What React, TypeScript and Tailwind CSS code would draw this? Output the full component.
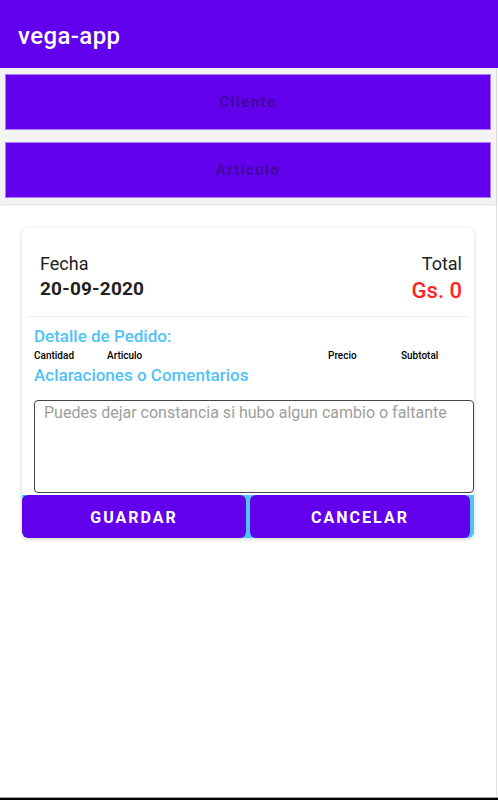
import React from "react";

const font = { fontFamily: "Roboto, 'Noto Sans', sans-serif" };

function SelectButton({ label }: { label: string }) {
  return (
    <button
      type="button"
      className="flex h-[56px] w-full items-center justify-center border border-[#a67dfb] bg-[#6200ee] text-[15px] font-medium tracking-[1.5px] text-[#3b0a8f]"
    >
      {label}
    </button>
  );
}

export default function App() {
  return (
    <div className="flex h-[800px] w-[498px] flex-col bg-white" style={font}>
      <header className="flex h-[68px] shrink-0 items-center bg-[#6200ee] px-[18px] pt-[4px]">
        <h1 className="text-[24px] font-medium tracking-[0.4px] text-white">vega-app</h1>
      </header>

      <main className="flex w-[497px] flex-1 flex-col border-r border-[#e0e0e0]">
        <div className="flex flex-col gap-[12px] bg-[#f3f3f3] px-[5px] pb-[6px] pt-[6px] shadow-[0_1px_2px_rgba(0,0,0,0.12)]">
          <SelectButton label="Cliente" />
          <SelectButton label="Articulo" />
        </div>

        <section className="mx-[22px] mt-[24px] overflow-hidden rounded-[6px] bg-white shadow-[0_1px_4px_rgba(0,0,0,0.18)]">
          <div className="flex justify-between pl-[18px] pr-[12px] pt-[24px] pb-[10px] text-[#212121]">
            <div>
              <p className="text-[18px] leading-[24px]">Fecha</p>
              <p className="text-[19px] font-bold leading-[26px] tracking-[0.2px]">20-09-2020</p>
            </div>
            <div className="flex flex-col items-end">
              <p className="text-[18px] leading-[24px]">Total</p>
              <p className="text-[22px] font-medium leading-[30px] text-[#ff2323]">Gs. 0</p>
            </div>
          </div>
          <div className="mx-[6px] h-px bg-[#ececec]" />

          <div className="pl-[12px] pt-[9px]">
            <h2 className="text-[17px] font-medium leading-[20px] text-[#4fc3f7]">Detalle de Pedido:</h2>
            <div className="mt-[4px] flex text-[10px] font-medium leading-[12px] text-black">
              <span className="w-[73px]">Cantidad</span>
              <span className="w-[221px]">Articulo</span>
              <span className="w-[73px]">Precio</span>
              <span>Subtotal</span>
            </div>
            <h2 className="mt-[3px] text-[17px] font-medium leading-[20px] text-[#4fc3f7]">
              Aclaraciones o Comentarios
            </h2>
            <textarea
              placeholder="Puedes dejar constancia si hubo algun cambio o faltante"
              className="mt-[15px] block h-[93px] w-full resize-none rounded-[4px] border border-[#444] px-[9px] py-[1px] text-[16px] leading-[22px] text-[#212121] outline-none placeholder:text-[#9e9e9e]"
            />
          </div>

          <div className="mt-[2px] flex h-[43px] gap-[4px] bg-[#4fc3f7] pr-[4px]">
            <button
              type="button"
              className="flex-[224] rounded-[6px] bg-[#6200ee] pt-[3px] text-[16px] font-bold tracking-[2px] text-white"
            >
              GUARDAR
            </button>
            <button
              type="button"
              className="flex-[220] rounded-[6px] bg-[#6200ee] pt-[3px] text-[16px] font-bold tracking-[2px] text-white"
            >
              CANCELAR
            </button>
          </div>
        </section>
      </main>

      <div className="h-px shrink-0 bg-[#9e9e9e]" />
      <div className="h-[2px] shrink-0 bg-black" />
    </div>
  );
}
